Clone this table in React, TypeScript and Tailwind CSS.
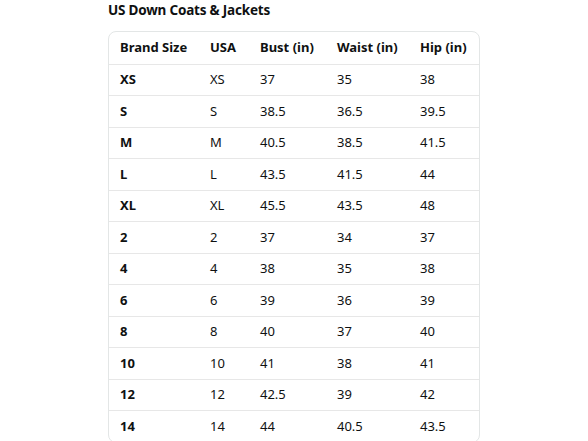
const rows: string[][] = [
  ['XS', 'XS', '37', '35', '38'],
  ['S', 'S', '38.5', '36.5', '39.5'],
  ['M', 'M', '40.5', '38.5', '41.5'],
  ['L', 'L', '43.5', '41.5', '44'],
  ['XL', 'XL', '45.5', '43.5', '48'],
  ['2', '2', '37', '34', '37'],
  ['4', '4', '38', '35', '38'],
  ['6', '6', '39', '36', '39'],
  ['8', '8', '40', '37', '40'],
  ['10', '10', '41', '38', '41'],
  ['12', '12', '42.5', '39', '42'],
  ['14', '14', '44', '40.5', '43.5'],
];

const headers = ['Brand Size', 'USA', 'Bust (in)', 'Waist (in)', 'Hip (in)'];
const widths = ['w-[90px]', 'w-[50px]', 'w-[77px]', 'w-[83px]', 'w-[71px]'];

export default function App() {
  return (
    <div className="w-[588px] h-[441px] overflow-hidden bg-white text-[#0f1111] font-['Noto_Sans',sans-serif]">
      <div className="pl-[108px] pt-[1px]">
        <h2 className="text-[13.5px] font-bold leading-[19px] tracking-[-0.2px]">US Down Coats &amp; Jackets</h2>
        <div className="mt-[11px] w-[372px] border border-[#e3e6e6] rounded-[8px] overflow-hidden">
          <table className="w-full table-fixed border-collapse text-[13px]">
            <thead>
              <tr className="h-[32px] border-b border-[#e7e7e7]">
                {headers.map((h, i) => (
                  <th key={h} className={`${widths[i]} text-left font-bold pl-[11px] align-middle`}>
                    {h}
                  </th>
                ))}
              </tr>
            </thead>
            <tbody>
              {rows.map((r, ri) => (
                <tr key={ri} className="h-[31.5px] border-b border-[#e7e7e7] last:border-b-0">
                  {r.map((c, ci) => (
                    <td key={ci} className={`pl-[11px] align-middle ${ci === 0 ? 'font-bold' : ''}`}>
                      {c}
                    </td>
                  ))}
                </tr>
              ))}
            </tbody>
          </table>
        </div>
      </div>
    </div>
  );
}
